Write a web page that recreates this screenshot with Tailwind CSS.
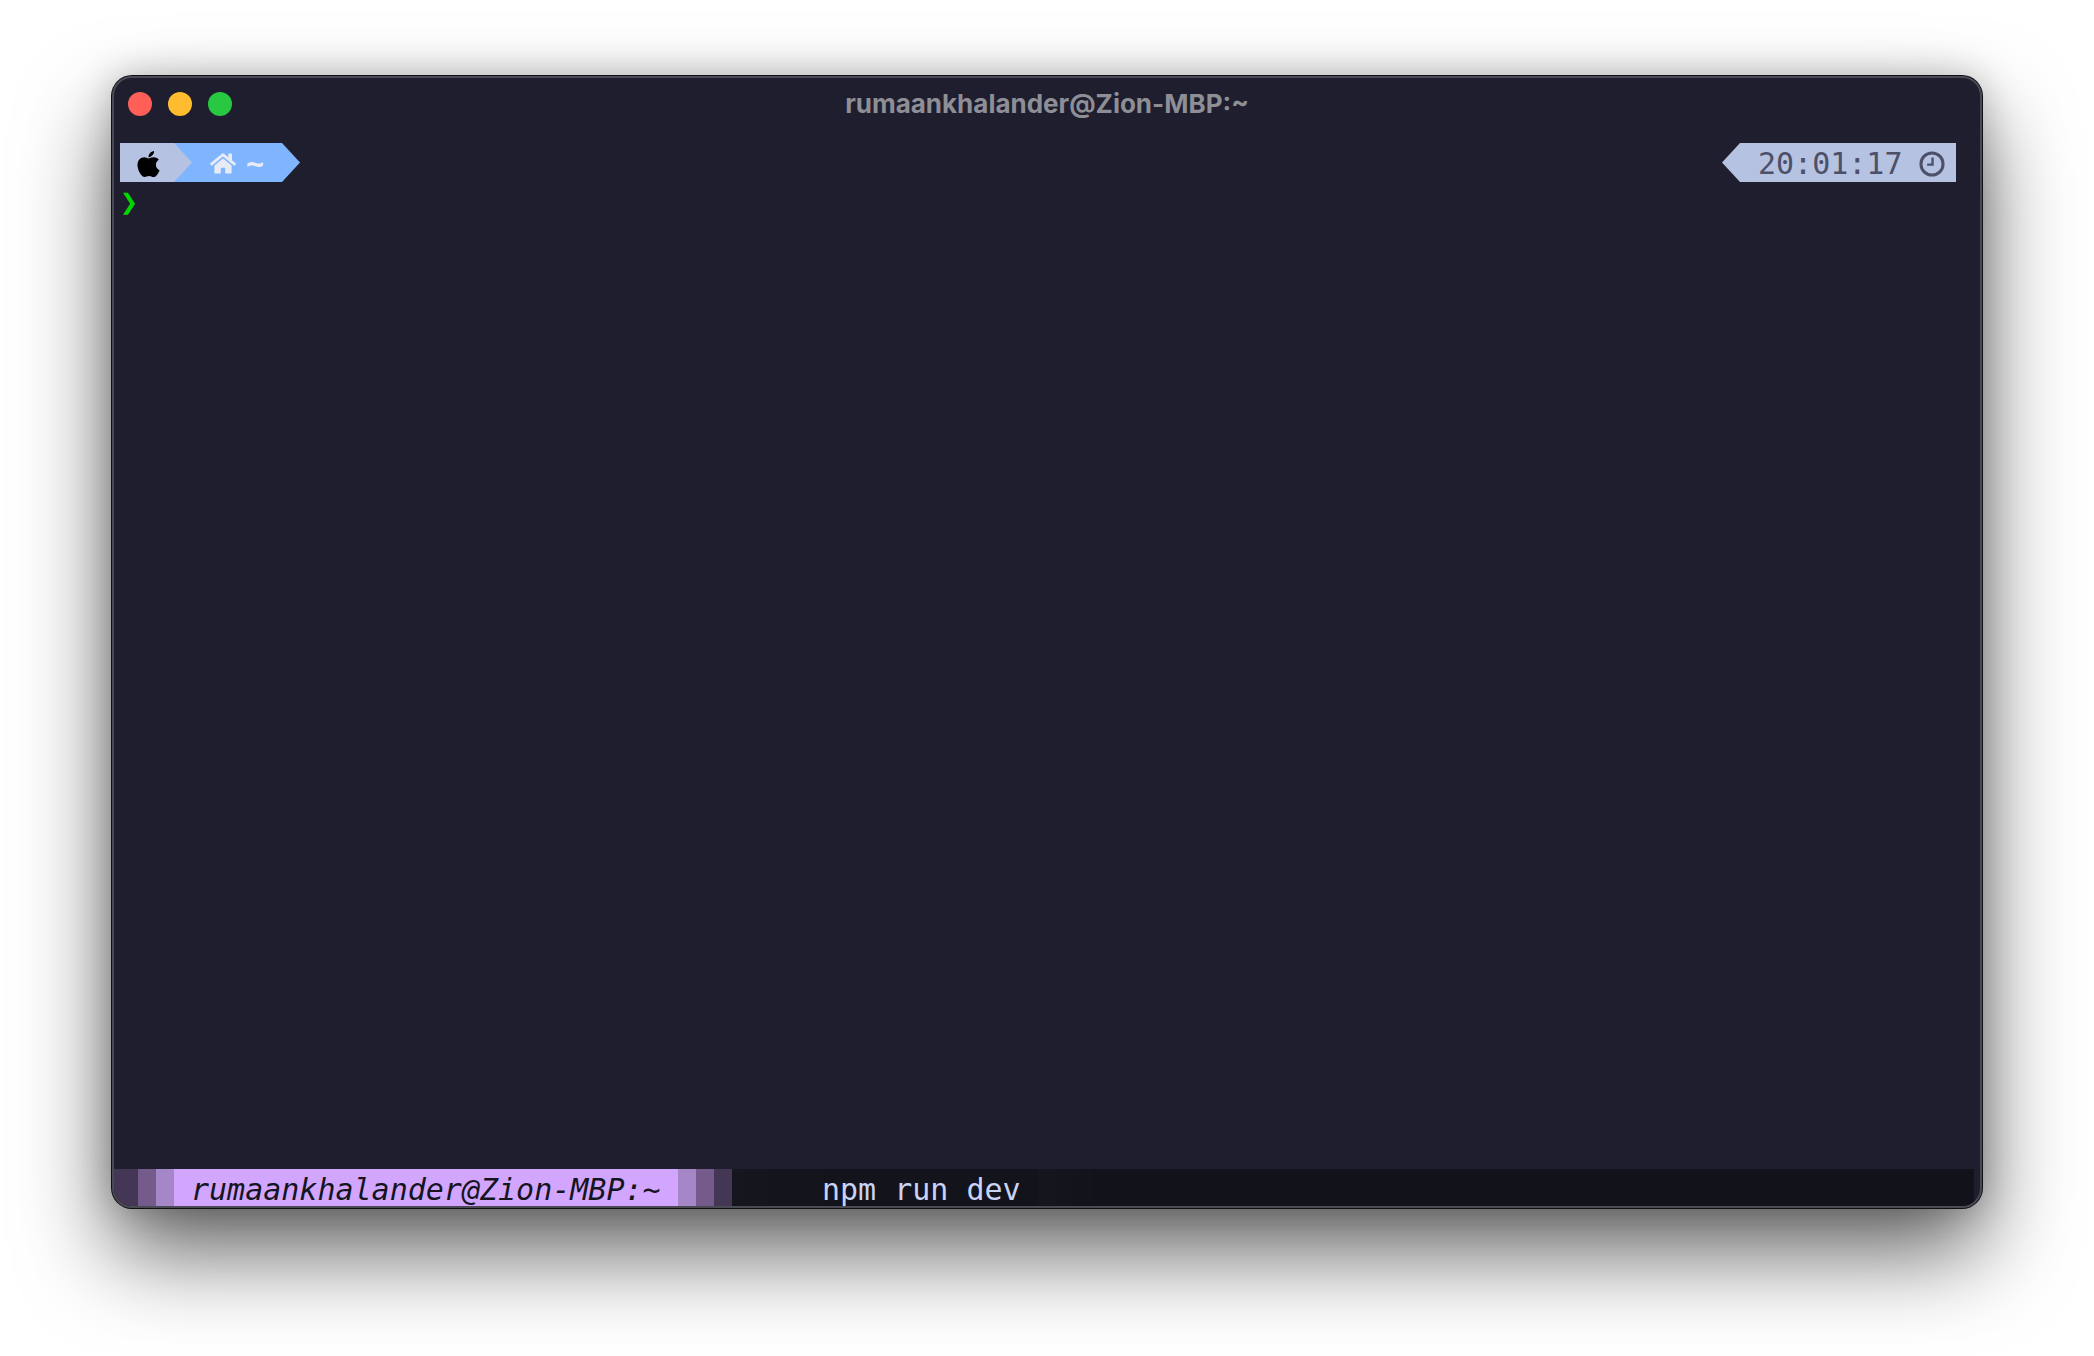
<!DOCTYPE html>
<html>
  <head>
    <meta charset="utf-8" />
    <title>Terminal</title>
    <script src="https://cdn.jsdelivr.net/npm/@tailwindcss/browser@4"></script>
  </head>
  <body class="bg-white h-[1356px] w-[2094px] overflow-hidden">
    <div class="pl-[112px] pt-[76px]">
      <!-- window -->
      <div class="w-[1870px] h-[1132px] rounded-[20px] bg-[#1e1e2e] border-[2px] border-[#4a4a55] overflow-hidden flex flex-col shadow-[0_0_0_1px_#101014,0_44px_90px_rgba(0,0,0,0.62),0_0_36px_rgba(0,0,0,0.22)] font-['DejaVu_Sans_Mono',monospace] text-[30px]">
        <!-- title bar -->
        <div class="relative h-[65px] shrink-0 flex items-center gap-4 pl-[14px] pb-[13px]">
          <div class="w-6 h-6 rounded-full bg-[#ff5f57]"></div>
          <div class="w-6 h-6 rounded-full bg-[#febc2e]"></div>
          <div class="w-6 h-6 rounded-full bg-[#28c840]"></div>
          <div class="absolute inset-0 pb-[15px] flex items-center justify-center font-['Inter',sans-serif] font-bold text-[26px] text-[#8e8e96]">rumaankhalander@Zion-MBP:~</div>
        </div>

        <!-- prompt top line -->
        <div class="h-[39px] shrink-0 flex justify-between pl-[6px] pr-[24px]">
          <div class="flex">
            <div class="w-[54px] bg-[#b6c2e2] flex items-center justify-end">
              <svg class="w-[23px] h-[30px] mr-[14px] mt-[2px]" viewBox="0 0 384 512" fill="#000"><path d="M318.7 268.7c-.2-36.7 16.4-64.4 50-84.8-18.8-26.9-47.2-41.7-84.7-44.6-35.5-2.8-74.3 20.7-88.5 20.7-15 0-49.4-19.7-76.4-19.7C63.3 141.2 4 184.8 4 273.5q0 39.3 14.4 81.2c12.8 36.7 59 126.7 107.2 125.2 25.2-.6 43-17.9 75.8-17.9 31.8 0 48.3 17.9 76.4 17.9 48.6-.7 90.4-82.5 102.6-119.3-65.2-30.7-61.7-90-61.7-91.9zm-56.6-164.2c27.3-32.4 24.8-61.9 24-72.5-24.1 1.4-52 16.4-67.9 34.9-17.5 19.8-27.8 44.3-25.6 71.9 26.1 2 49.9-11.4 69.5-34.3z"/></svg>
            </div>
            <div class="w-[18px] bg-[#7fb5ff]">
              <div class="h-full bg-[#b6c2e2] [clip-path:polygon(0_0,100%_50%,0_100%)]"></div>
            </div>
            <div class="w-[90px] bg-[#7fb5ff] flex items-center text-[#e6ebf5] pl-[18px]">
              <svg class="w-[26px] h-[23px] shrink-0 mt-[2px]" viewBox="0 0 576 512" fill="currentColor"><path d="M280.37 148.26L96 300.11V464a16 16 0 0 0 16 16l112.06-.29a16 16 0 0 0 15.92-16V368a16 16 0 0 1 16-16h64a16 16 0 0 1 16 16v95.64a16 16 0 0 0 16 16.05L464 480a16 16 0 0 0 16-16V300L295.67 148.26a12.19 12.19 0 0 0-15.3 0zM571.6 251.47L488 182.56V44.05a12 12 0 0 0-12-12h-56a12 12 0 0 0-12 12v72.61L318.47 43a48 48 0 0 0-61 0L4.34 251.47a12 12 0 0 0-1.6 16.9l25.5 31A12 12 0 0 0 45.15 301l235.22-193.74a12.19 12.19 0 0 1 15.3 0L530.9 301a12 12 0 0 0 16.9-1.6l25.5-31a12 12 0 0 0-1.7-17z"/></svg>
              <span class="ml-[10px] font-bold leading-none mt-[2px]">~</span>
            </div>
            <div class="w-[18px] bg-[#7fb5ff] [clip-path:polygon(0_0,100%_50%,0_100%)]"></div>
          </div>
          <div class="flex">
            <div class="w-[18px] bg-[#b6c2e2] [clip-path:polygon(100%_0,0_50%,100%_100%)]"></div>
            <div class="w-[216px] bg-[#b6c2e2] flex items-center text-[#4c5068] pl-[18px]">
              <span class="leading-none mt-[2px]">20:01:17</span>
              <svg class="w-[26px] h-[26px] ml-[16px] shrink-0 mt-[2px]" viewBox="0 0 24 24" fill="none" stroke="currentColor"><circle cx="12" cy="12" r="10.2" stroke-width="2.8"/><path d="M12.5 6v6.6H7.5" stroke-width="2.2"/></svg>
            </div>
          </div>
        </div>

        <!-- prompt char -->
        <div class="h-[39px] shrink-0 pl-[6px] text-[#00d700] leading-[39px]">❯</div>

        <div class="flex-1"></div>

        <!-- tmux status line -->
        <div class="h-[37px] shrink-0 flex mr-[6px] leading-[41px]">
          <div class="w-[24px] bg-[#433755]"></div>
          <div class="w-[18px] bg-[#755a8c]"></div>
          <div class="w-[18px] bg-[#a586c7]"></div>
          <div class="w-[504px] bg-[#d2a6ff] text-[#15151f] italic pl-[17px]">rumaankhalander@Zion-MBP:~</div>
          <div class="w-[18px] bg-[#a586c7]"></div>
          <div class="w-[18px] bg-[#755a8c]"></div>
          <div class="w-[18px] bg-[#433755]"></div>
          <div class="flex-1 flex bg-[#12121b] text-[#c8d3f5]">
            <div class="w-[18px] bg-[#15161e]"></div>
            <div class="w-[18px] bg-[#14151d]"></div>
            <div class="w-[18px] bg-[#13141c]"></div>
            <div class="w-[36px] bg-[#14141d]"></div>
            <div class="w-[216px] bg-[#13131c]">npm run dev</div>
            <div class="w-[18px] bg-[#15151e]"></div>
            <div class="w-[18px] bg-[#14141d]"></div>
            <div class="w-[18px] bg-[#13131c]"></div>
          </div>
        </div>
      </div>
    </div>
  </body>
</html>
